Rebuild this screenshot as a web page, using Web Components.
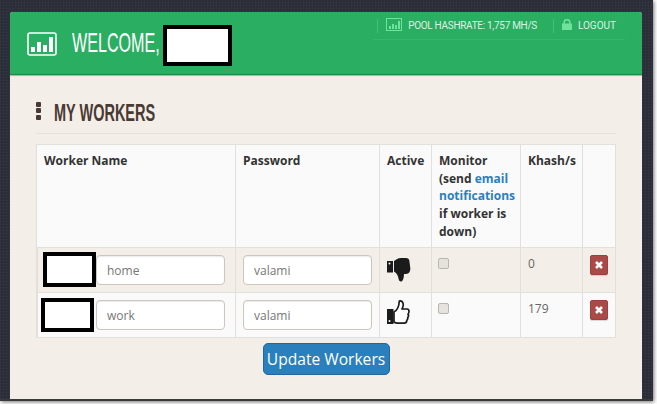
<!DOCTYPE html>
<html>
<head>
<meta charset="utf-8">
<title>My Workers</title>
<style>
	html, body { margin: 0; height: 100%; background: #fff; overflow: hidden; }
</style>
</head>
<body>
<pool-window>
	<pool-header slot="header"></pool-header>
	<section-title>MY WORKERS</section-title>
	<workers-table>
		<worker-row name="home" password="valami" khash="0" state="down"></worker-row>
		<worker-row name="work" password="valami" khash="179" state="up" shifted></worker-row>
	</workers-table>
	<update-button>Update Workers</update-button>
</pool-window>

<script>
class PoolWindow extends HTMLElement {
	constructor() {
		super();
		this.attachShadow({ mode: 'open' });
		this.shadowRoot.innerHTML = `
      <style>
        :host {
          display: block;
          box-sizing: border-box;
          width: 653px;
          height: 401px;
          padding: 12px 11px 0 10px;
          background-color: #2a2c38;
          background-image:
            repeating-linear-gradient(0deg, rgba(255,255,255,0.025) 0 1px, transparent 1px 3px),
            repeating-linear-gradient(90deg, rgba(255,255,255,0.025) 0 1px, transparent 1px 3px);
          border-bottom: 2px solid #3a3a3a;
          box-shadow: 1px 1px 4px rgba(0, 0, 0, 0.55);
          overflow: hidden;
        }
        .box {
          height: 100%;
          display: flex;
          flex-direction: column;
          background: #f3eee8;
          border-radius: 3px 3px 0 0;
        }
        main {
          flex: 1;
          display: flex;
          flex-direction: column;
          padding: 0 26px;
        }
      </style>
      <div class="box">
        <slot name="header"></slot>
        <main><slot></slot></main>
      </div>
    `;
	}
}

class PoolHeader extends HTMLElement {
	constructor() {
		super();
		this.attachShadow({ mode: 'open' });
		this.shadowRoot.innerHTML = `
      <style>
        :host {
          display: flex;
          justify-content: space-between;
          box-sizing: border-box;
          height: 63px;
          background: #2aae62;
          border-bottom: 1px solid #1f8a4c;
          border-radius: 3px 3px 0 0;
          box-shadow: 0 1px 1px rgba(90, 80, 60, 0.4);
          color: #fff;
        }
        .brand {
          display: flex;
          align-items: center;
          gap: 15px;
          padding-left: 17px;
        }
        .brand svg { display: block; margin-top: 2px; }
        h1 {
          margin: 0;
          width: 88px;
          font: normal 28px/1 "Liberation Sans", sans-serif;
          transform: scaleX(0.575);
          transform-origin: left center;
          white-space: nowrap;
        }
        .name {
          box-sizing: border-box;
          width: 69px;
          height: 41px;
          margin-top: 4px;
          background: #fff;
          border: 4px solid #000;
        }
        .left { display: flex; align-items: center; gap: 3px; }
        nav {
          display: flex;
          align-items: center;
          align-self: flex-start;
          box-sizing: border-box;
          height: 28px;
          margin-right: 17px;
          padding: 0 9px 0 4px;
          border-bottom: 1px solid #36b66c;
          font: 10px/1 Roboto, "Liberation Sans", sans-serif;
          color: #d8f5e3;
        }
        .item {
          display: flex;
          align-items: center;
          gap: 6px;
          height: 14px;
          padding-left: 8px;
          border-left: 1px solid #3cc478;
          white-space: nowrap;
        }
        .item + .item { margin-left: 16px; }
        .item svg { display: block; margin-top: -3px; }
        .rate { letter-spacing: -0.3px; }
      </style>
      <div class="brand">
        <svg width="30" height="24" viewBox="0 0 30 24">
          <rect x="1" y="1" width="28" height="22" rx="2" fill="none" stroke="#fff" stroke-width="1.6"/>
          <path fill="#fff" d="M4 15h4v5H4zM10 10h4v10h-4zM16 13h4v7h-4zM22 5h4v15h-4z"/>
        </svg>
        <div class="left">
          <h1>WELCOME,</h1>
          <div class="name"></div>
        </div>
      </div>
      <nav>
        <div class="item">
          <svg width="16" height="13" viewBox="0 0 16 13">
            <rect x="0.5" y="0.5" width="15" height="12" fill="none" stroke="#6fe39d"/>
            <path fill="#6fe39d" d="M3 8h2v3H3zM6 6h2v5H6zM9 7h2v4H9zM12 3h2v8h-2z"/>
          </svg>
          <span class="rate">POOL HASHRATE: 1,757 MH/S</span>
        </div>
        <div class="item">
          <svg width="10" height="11" viewBox="0 0 10 11">
            <path fill="#6fe39d" d="M0 4.500h1.400V3.400a3.600 3.400 0 0 1 7.200 0v1.100H10V11H0zM2.900 4.500h4.200V3.500a2.100 2 0 0 0-4.200 0z"/>
          </svg>
          <span>LOGOUT</span>
        </div>
      </nav>
    `;
	}
}

class SectionTitle extends HTMLElement {
	constructor() {
		super();
		this.attachShadow({ mode: 'open' });
		this.shadowRoot.innerHTML = `
      <style>
        :host {
          display: flex;
          align-items: center;
          gap: 13px;
          box-sizing: border-box;
          height: 59px;
          padding-top: 13px;
          border-bottom: 1px solid #e6e0d5;
          color: #4a3a33;
          font: bold 23px/1 "Liberation Sans", sans-serif;
        }
        .dots { display: grid; gap: 1.5px; }
        .dots i { display: block; width: 5px; height: 5px; background: #4a3a33; border-radius: 1px; }
        span { display: block; margin-top: 5px; transform: scaleX(0.63); transform-origin: left center; white-space: nowrap; }
      </style>
      <div class="dots"><i></i><i></i><i></i></div>
      <span><slot></slot></span>
    `;
	}
}

class WorkersTable extends HTMLElement {
	constructor() {
		super();
		this.attachShadow({ mode: 'open' });
		this.shadowRoot.innerHTML = `
      <style>
        :host {
          display: block;
          box-sizing: border-box;
          width: 580px;
          margin-top: 10px;
          border: 1px solid #e3dfda;
          border-bottom-width: 0;
          color: #333;
          font: 12px/17.67px "Open Sans", sans-serif;
        }
        .head {
          display: grid;
          grid-template-columns: 198px 144px 52px 89px 62px 1fr;
          box-sizing: border-box;
          height: 103px;
          background: #fafafa;
          border-bottom: 1px solid #e3dfda;
          font-weight: bold;
        }
        .head div { padding: 7px 7px 0; border-left: 1px solid #e3dfda; }
        .head div:first-child { border-left: 0; }
        a { color: #2a7fc0; text-decoration: none; }
      </style>
      <div class="head">
        <div>Worker Name</div>
        <div>Password</div>
        <div>Active</div>
        <div><span>Monitor</span><br><span>(send</span> <a href="#">email</a><br><a href="#">notifications</a><br><span>if worker is</span><br><span>down)</span></div>
        <div>Khash/s</div>
        <div></div>
      </div>
      <slot></slot>
    `;
	}
}

class WorkerRow extends HTMLElement {
	constructor() {
		super();
		this.attachShadow({ mode: 'open' });
		const up = this.getAttribute('state') === 'up';
		const icon = up
			? `<svg width="24" height="28" viewBox="0 0 24 28">
          <path fill="#1b1b1b" d="M1 11h6.500v15H1z"/>
          <circle cx="3.500" cy="23" r="1" fill="#fff"/>
          <path fill="#fff" stroke="#1b1b1b" stroke-width="1.700" stroke-linejoin="round" d="M8 14C11 12.500 13 9 13.300 3C15.800 2.300 17.500 4.500 17.200 7.500C17 9 16.500 10 16 11H21C22.600 11 23.200 12.400 22.900 14C22.800 15 22.400 15.700 22 16.300C22.700 17.300 22.500 18.700 21.700 19.500C21.900 20.700 21.500 21.700 20.800 22.300C20.800 24 19.800 25.200 18.200 25.200H11.500C10 25.200 9 24.700 8 24Z"/>
        </svg>`
			: `<svg width="26" height="28" viewBox="0 0 26 28">
          <path fill="#1b1b1b" d="M1 5h6v11.500H1z"/>
          <circle cx="3.500" cy="7.500" r="1" fill="#fff"/>
          <path fill="#1b1b1b" d="M8 5C10 3.500 12 2 15 2H20C22 2 23 3 23.300 4.500L24.300 12C24.600 15 23 18 20 18H18C18 20 17.500 24.500 15.500 25.500C14 26 12.800 24.500 12.500 22.500C12.200 20 11 17.500 8 15.500Z"/>
        </svg>`;
		this.shadowRoot.innerHTML = `
      <style>
        :host {
          display: grid;
          grid-template-columns: 198px 144px 52px 89px 62px 1fr;
          box-sizing: border-box;
          height: 45px;
          border-bottom: 1px solid #e3dfda;
          color: #666;
          font: 12px/17.6px "Open Sans", sans-serif;
        }
        :host([state="up"]) { background: #fafafa; }
        .cell { box-sizing: border-box; padding: 7px 7px 0; border-left: 1px solid #e3dfda; min-width: 0; }
        .cell:first-child { border-left: 0; }
        .name { display: flex; align-items: flex-start; padding: 4px 0 0 5px; }
        .mask {
          box-sizing: border-box;
          flex: none;
          width: 53px;
          height: 35px;
          background: #fff;
          border: 4px solid #000;
        }
        :host([shifted]) .mask { height: 34px; margin: 1px 2px 0 -2px; }
        input {
          display: block;
          box-sizing: border-box;
          width: 129px;
          height: 30px;
          padding: 0 10px;
          background: #fff;
          border: 1px solid #ccc6bd;
          border-radius: 4px;
          box-shadow: inset 0 1px 1px rgba(0, 0, 0, 0.08);
          color: #777;
          font: 12px "Open Sans", sans-serif;
          outline: 0;
        }
        .name input { margin-top: 3px; }
        .icon { padding: 8px 0 0 6px; }
        :host([state="up"]) .icon { padding-top: 5px; }
        .icon svg { display: block; }
        .check { padding: 10px 0 0 6px; }
        .box {
          box-sizing: border-box;
          width: 11px;
          height: 11px;
          background: #e6e3df;
          border: 1px solid #b9b5b0;
          border-radius: 2px;
        }
        .del { padding-right: 0; }
        .del button {
          display: grid;
          place-items: center;
          width: 18px;
          height: 20px;
          padding: 0;
          background: #a94a48;
          border: 1px solid #98413f;
          border-radius: 2px;
          box-shadow: 0 1px 1px rgba(0, 0, 0, 0.15);
        }
      </style>
      <div class="cell name"><div class="mask"></div><input value="${this.getAttribute('name')}"></div>
      <div class="cell pass"><input value="${this.getAttribute('password')}"></div>
      <div class="cell icon">${icon}</div>
      <div class="cell check"><div class="box"></div></div>
      <div class="cell kh">${this.getAttribute('khash')}</div>
      <div class="cell del">
        <button>
          <svg width="8" height="8" viewBox="0 0 8 8"><path stroke="#fff" stroke-width="2.600" d="M1 1l6 6M7 1L1 7"/></svg>
        </button>
      </div>
    `;
	}
}

class UpdateButton extends HTMLElement {
	constructor() {
		super();
		this.attachShadow({ mode: 'open' });
		this.shadowRoot.innerHTML = `
      <style>
        :host { display: flex; justify-content: center; width: 580px; margin-top: 5px; }
        button {
          box-sizing: border-box;
          width: 127px;
          height: 32px;
          padding: 0;
          background: #2a7fbd;
          border: 1px solid #22689c;
          border-radius: 5px;
          color: #fff;
          font: 15.6px "Open Sans", sans-serif;
        }
      </style>
      <button><slot></slot></button>
    `;
	}
}

customElements.define('pool-window', PoolWindow);
customElements.define('pool-header', PoolHeader);
customElements.define('section-title', SectionTitle);
customElements.define('workers-table', WorkersTable);
customElements.define('worker-row', WorkerRow);
customElements.define('update-button', UpdateButton);
</script>
</body>
</html>
